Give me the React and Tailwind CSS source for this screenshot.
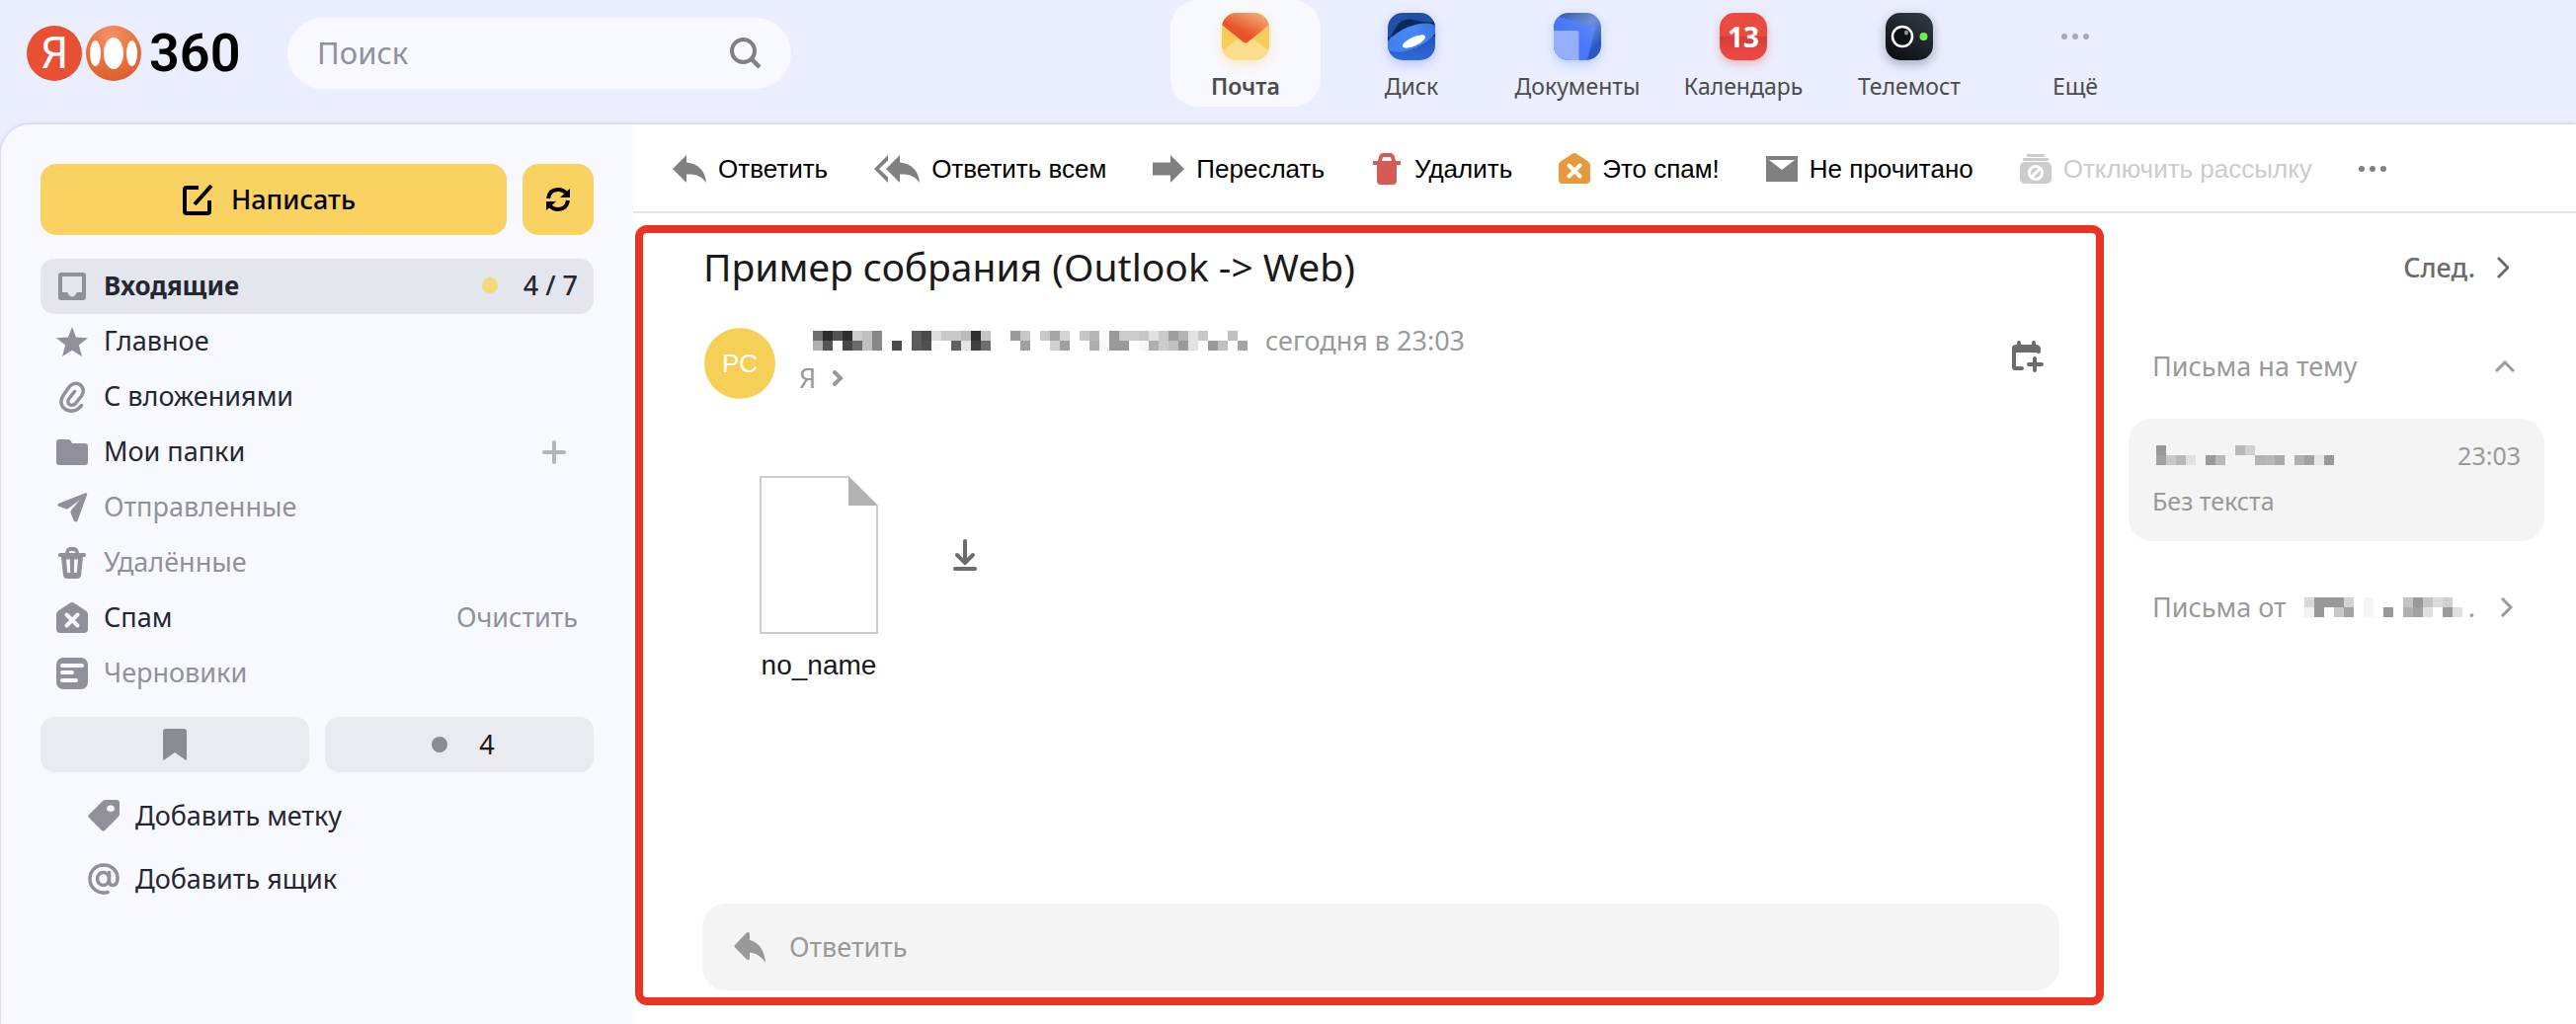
import React from "react";

const TEXT = "font-['Noto_Sans',sans-serif]";
const ARIAL = "font-['Liberation_Sans',sans-serif]";

function Icon({ w = 32, h = 32, className = "", children }) {
  return (
    <svg width={w} height={h} viewBox={`0 0 ${w} ${h}`} fill="currentColor" aria-hidden="true" className={`shrink-0 ${className}`}>
      {children}
    </svg>
  );
}

/* ---------- Service icons ---------- */

function MailApp() {
  return (
    <Icon w={48} h={48} className="drop-shadow-[0_4px_6px_rgba(249,190,70,0.3)]">
      <defs>
        <clipPath id="mailClip"><rect width="48" height="48" rx="15" /></clipPath>
        <linearGradient id="mailFlap" x1="0.3" y1="0.7" x2="0.85" y2="0">
          <stop offset="0.15" stopColor="#e9532b" />
          <stop offset="1" stopColor="#f4b07a" />
        </linearGradient>
      </defs>
      <g clipPath="url(#mailClip)">
        <rect width="48" height="48" fill="#f9cb58" />
        <path d="M0 39L24 20L48 39V48H0Z" fill="#f9dd8b" />
        <path d="M0 0H48V12L26.500 29.500Q24 31.500 21.500 29.500L0 12Z" fill="url(#mailFlap)" />
      </g>
    </Icon>
  );
}

function DiskApp() {
  return (
    <Icon w={48} h={48} className="drop-shadow-[0_4px_6px_rgba(80,100,250,0.3)]">
      <defs>
        <clipPath id="diskClip"><rect width="48" height="48" rx="15" /></clipPath>
        <linearGradient id="diskBg" x1="0" y1="0" x2="0" y2="1">
          <stop offset="0.4" stopColor="#2150aa" />
          <stop offset="1" stopColor="#2f6ade" />
        </linearGradient>
        <linearGradient id="diskRing" x1="0" y1="0" x2="1" y2="0">
          <stop offset="0" stopColor="#3f7ff3" />
          <stop offset="0.6" stopColor="#4687f8" />
          <stop offset="1" stopColor="#3672e4" />
        </linearGradient>
      </defs>
      <g clipPath="url(#diskClip)">
        <rect width="48" height="48" fill="url(#diskBg)" />
        <path d="M0 28C5 24 8 9 18 7C26 5 34 11 48 9V24H0Z" fill="#0f2a57" />
        <ellipse cx="24" cy="25" rx="27" ry="11" transform="rotate(-23 24 25)" fill="url(#diskRing)" />
        <ellipse cx="26.500" cy="29" rx="12.500" ry="4.500" transform="rotate(-25 26.500 29)" fill="#fff" />
      </g>
    </Icon>
  );
}

function DocsApp() {
  return (
    <Icon w={48} h={48} className="drop-shadow-[0_4px_6px_rgba(80,150,250,0.35)]">
      <defs>
        <clipPath id="docsClip"><rect width="48" height="48" rx="15" /></clipPath>
        <linearGradient id="docsBg" x1="0" y1="0" x2="1" y2="1">
          <stop offset="0" stopColor="#2b56ad" />
          <stop offset="0.5" stopColor="#7191d4" />
          <stop offset="0.8" stopColor="#2a5ac0" />
        </linearGradient>
        <linearGradient id="docsMid" x1="0" y1="1" x2="1" y2="0">
          <stop offset="0.5" stopColor="#4777fa" />
          <stop offset="1" stopColor="#688ef6" />
        </linearGradient>
      </defs>
      <g clipPath="url(#docsClip)">
        <rect width="48" height="48" fill="url(#docsBg)" />
        <path d="M0 3L41 13Q42.500 13.500 42.200 15L34 48H0Z" fill="url(#docsMid)" />
        <path d="M0 18H24Q25.500 18 25.500 19.500V48H0Z" fill="#94aff8" />
      </g>
    </Icon>
  );
}

function CalendarApp() {
  return (
    <span className="flex size-12 items-center justify-center rounded-[15px] bg-[linear-gradient(#ec4a40_50%,#d03e38_50%,#ea4840_85%)] text-[28px] leading-none font-bold text-white shadow-[0_4px_10px_rgba(236,74,64,0.3)]">
      13
    </span>
  );
}

function TelemostApp() {
  return (
    <Icon w={48} h={48} className="drop-shadow-[0_4px_6px_rgba(20,50,60,0.35)]">
      <defs>
        <linearGradient id="teleBg" x1="0.2" y1="1" x2="0.8" y2="0">
          <stop offset="0" stopColor="#0b0d10" />
          <stop offset="1" stopColor="#2f3a46" />
        </linearGradient>
      </defs>
      <rect width="48" height="48" rx="15" fill="url(#teleBg)" />
      <circle cx="17" cy="24" r="10" fill="#0e1216" stroke="#fff" strokeWidth="2.500" />
      <ellipse cx="21" cy="20" rx="2" ry="2.500" fill="#8b929b" />
      <circle cx="38.500" cy="24" r="4" fill="#6bf54b" />
    </Icon>
  );
}

/* ---------- Toolbar icons ---------- */

const REPLY = "M0 14L14 0V7.500C26 8.500 33 16 34 28C29 21 23 19 14 19.500V28Z";

const Reply = () => <Icon w={34} h={28}><path d={REPLY} /></Icon>;
const ReplyAll = () => (
  <Icon w={46} h={28}>
    <path d="M14 0V5.500L5 14L14 22.500V28L0 14Z" />
    <path d={REPLY} transform="translate(12 0)" />
  </Icon>
);
const Forward = () => <Icon w={32} h={28}><path d="M0 7.500H18V0L32 14L18 28V20.500H0Z" /></Icon>;
const Trash = () => (
  <Icon className="text-[#d55b57]">
    <path fillRule="evenodd" d="M2 8H7L8.500 2.500Q9.300 0 12 0H20Q22.700 0 23.500 2.500L25 8H30V12H26V28Q26 32 22 32H10Q6 32 6 28V12H2ZM11 8H21L20 4H12Z" />
  </Icon>
);
const SPAM = "M16 0Q17 0 18.500 1L30 8.500Q32 10 32 12V27Q32 31 28 31H4Q0 31 0 27V12Q0 10 2 8.500L13.500 1Q15 0 16 0Z";
const SpamOrange = () => (
  <Icon className="text-[#e69a3b]">
    <path d={SPAM} />
    <path d="M10.500 12.500L21.500 23.500M21.500 12.500L10.500 23.500" stroke="#fff" strokeWidth="4" strokeLinecap="round" />
  </Icon>
);
const Unread = () => (
  <Icon h={26}>
    <rect width="32" height="26" />
    <path d="M3 4H29L16 14Z" fill="#fff" />
  </Icon>
);
const Unsubscribe = () => (
  <Icon>
    <rect x="7" y="1" width="18" height="3" rx="1" />
    <rect x="3" y="5" width="26" height="3" rx="1" />
    <rect y="9" width="32" height="22" rx="5" />
    <circle cx="16" cy="20" r="6.500" fill="none" stroke="#fff" strokeWidth="3" />
    <path d="M12 24L20 16" stroke="#fff" strokeWidth="3" />
  </Icon>
);
const Dots = ({ className }) => (
  <Icon w={28} h={8} className={className}>
    <circle cx="3" cy="4" r="3" /><circle cx="14" cy="4" r="3" /><circle cx="25" cy="4" r="3" />
  </Icon>
);

/* ---------- Sidebar icons ---------- */

const InboxIcon = () => (
  <Icon>
    <path fillRule="evenodd" d="M5 2H27Q30 2 30 5V27Q30 30 27 30H5Q2 30 2 27V5Q2 2 5 2ZM6 6V22H11L13.500 25.500Q16 27.500 18.500 25.500L21 22H26V6Z" />
  </Icon>
);
const StarIcon = () => (
  <Icon>
    <path d="M16 1L20 11.500L32 12.200L22.800 19.500L26 31L16 24.800L6 31L9.200 19.500L0 12.200L12 11.500Z" strokeLinejoin="round" />
  </Icon>
);
const ClipIcon = () => (
  <Icon>
    <path fill="none" stroke="currentColor" strokeWidth="3.500" strokeLinecap="round" d="M25.500 24.500C22 29.500 16.500 31 11.500 29.500C5 27.500 3 20.500 7 14.500L12.500 6.500C15.500 2 20.500 1 24 3.500C28 6.500 28 11 25.500 15L19.500 22.500C18 24.500 15 25 13 23.300C11.300 21.800 11.500 19.300 13 17.500L18.500 10.500" />
  </Icon>
);
const FolderIcon = () => (
  <Icon><path d="M3 3H12Q14 3 15 5L16 7H29Q32 7 32 10V26Q32 29 29 29H3Q0 29 0 26V6Q0 3 3 3Z" /></Icon>
);
const SendIcon = () => (
  <Icon><path d="M2 12L29.500 1.200Q31.500 0.800 31.200 2.800L21.500 29.500Q19.500 31.500 17.800 29.500L14.500 21.500Q14.300 20 15 18.800L24 8L12.500 16.700Q11 17.800 9.500 17.300L2 14.500Q0.800 13.300 2 12Z" /></Icon>
);
const BinIcon = () => (
  <Icon>
    <path fillRule="evenodd" d="M9 6Q10 0 14 0H18Q22 0 23 6H28.500Q30 6 30 8Q30 10 28.500 10H27L25 28.500Q24.500 32 21 32H11Q7.500 32 7 28.500L5 10H3.500Q2 10 2 8Q2 6 3.500 6ZM12.500 6H19.500Q19 4 17.500 4H14.500Q13 4 12.500 6ZM10 12.500L11.200 26H14.200L13.800 12.500ZM22 12.500L20.800 26H17.800L18.200 12.500Z" />
  </Icon>
);
const SpamIcon = () => (
  <Icon>
    <path d={SPAM} />
    <path d="M10.500 12.500L21.500 23.500M21.500 12.500L10.500 23.500" stroke="#f8f9fe" strokeWidth="4" strokeLinecap="round" />
  </Icon>
);
const DraftIcon = () => (
  <Icon>
    <rect width="32" height="32" rx="7" />
    <path d="M6 8H26M6 15H16M6 23H20" stroke="#f8f9fe" strokeWidth="4" strokeLinecap="round" />
  </Icon>
);

/* ---------- Pixelated names ---------- */

function Mosaic({ rows, cols, className, label }) {
  return (
    <svg role="img" aria-label={label} width={cols * 10} height={rows.length * 10} className={`shrink-0 ${className}`} shapeRendering="crispEdges">
      {rows.map((row, y) =>
        row.split(" ").map((c, x) => c !== "--" && <rect key={`${y}-${x}`} x={x * 10} y={y * 10} width="10" height="10" fill={`#${c}${c}${c}`} />)
      )}
    </svg>
  );
}

const SENDER = [
  "6e 2d 55 2f cc c0 88 -- -- -- 5c 4a dd c8 c8 bb 2f c4 -- -- 9a c8 -- c8 a6 d4 -- c6 b6 fa 99 cc cc c6 e0 ca 9e b4 e2 c8 -- -- c0 --",
  "af 55 -- 48 6a c0 88 -- 4a -- 5c 50 fa -- 60 e4 40 6e -- -- -- a0 -- -- d0 a0 -- -- ae f8 99 99 -- f8 ae cc c0 9a e2 -- 99 c0 -- a4",
];
const CARD = [
  "99 -- -- -- -- -- -- -- b8 d0 -- -- -- -- -- -- -- --",
  "a2 c8 b8 e0 -- 99 b8 -- -- -- b4 b8 aa -- b0 a2 e8 99",
];
const FROM = [
  "d8 99 99 99 d4 -- f5 -- -- -- c4 99 c4 da d0 --",
  "f2 99 -- c8 a2 -- f5 -- 99 -- b0 a2 e0 -- 9c e0",
];

/* ---------- Page ---------- */

const services = [
  { label: "Почта", icon: <MailApp />, active: true },
  { label: "Диск", icon: <DiskApp /> },
  { label: "Документы", icon: <DocsApp /> },
  { label: "Календарь", icon: <CalendarApp /> },
  { label: "Телемост", icon: <TelemostApp /> },
  { label: "Ещё", icon: <span className="flex size-12 items-center justify-center"><Dots className="text-[#a6a8b3]" /></span> },
];

function Header() {
  return (
    <header className="flex h-[126px] items-start">
      <a href="#home" aria-label="Яндекс 360" className="ml-[27px] flex h-[108px] w-[264px] shrink-0 items-center gap-1">
        <span className="flex size-14 items-center justify-center rounded-full bg-[#e95033] font-['Roboto',sans-serif] text-[44px] leading-none text-white">Я</span>
        <svg width="56" height="56" viewBox="0 0 56 56" aria-hidden="true">
          <defs>
            <radialGradient id="logoBall" cx="0.45" cy="0.2" r="0.8">
              <stop offset="0" stopColor="#f59267" />
              <stop offset="0.6" stopColor="#e9713c" />
              <stop offset="1" stopColor="#dd5e2c" />
            </radialGradient>
          </defs>
          <circle cx="28" cy="28" r="28" fill="url(#logoBall)" />
          <g fill="#fff">
            <ellipse cx="28" cy="28" rx="10" ry="16" />
            <ellipse cx="9.500" cy="28" rx="5.500" ry="13" />
            <ellipse cx="46.500" cy="28" rx="5.500" ry="13" />
          </g>
        </svg>
        <span className="ml-1 font-['Roboto',sans-serif] text-[54px] leading-none font-semibold text-black">360</span>
      </a>
      <form className="mt-[18px] flex h-[72px] w-[510px] shrink-0 items-center rounded-[36px] bg-[#f8f9fe] pr-[30px] pl-[30px]">
        <input type="text" placeholder="Поиск" aria-label="Поиск" className="mb-0.5 min-w-0 flex-1 bg-transparent text-[31px] outline-none placeholder:text-[#90919b]" />
        <button type="button" aria-label="Найти" className="text-[#808080]">
          <Icon>
            <circle cx="13.500" cy="13.500" r="11.500" fill="none" stroke="currentColor" strokeWidth="4" />
            <path d="M21.500 21.500L30 30" stroke="currentColor" strokeWidth="4.500" />
          </Icon>
        </button>
      </form>
      <nav className="ml-[376px] flex">
        {services.map((s) => (
          <a key={s.label} href="#service" className={`flex h-[108px] w-[168px] shrink-0 flex-col items-center text-[23px] leading-8 text-[#4c4c4c] ${s.active ? "font-semibold" : ""}`}>
            <span className={`flex h-full w-[152px] flex-col items-center gap-[10px] rounded-[28px] pt-[13px] ${s.active ? "bg-[#f8f9fe]" : ""}`}>
              {s.icon}
              <span>{s.label}</span>
            </span>
          </a>
        ))}
      </nav>
    </header>
  );
}

const folders = [
  { label: "Входящие", icon: <InboxIcon />, active: true },
  { label: "Главное", icon: <StarIcon /> },
  { label: "С вложениями", icon: <ClipIcon /> },
  { label: "Мои папки", icon: <FolderIcon />, plus: true },
  { label: "Отправленные", icon: <SendIcon />, muted: true },
  { label: "Удалённые", icon: <BinIcon />, muted: true },
  { label: "Спам", icon: <SpamIcon />, clear: true },
  { label: "Черновики", icon: <DraftIcon />, muted: true },
];

function Sidebar() {
  return (
    <aside className="w-[640px] shrink-0 rounded-tl-[30px] bg-[#f8f9fe] px-10 pt-10 text-[27px] leading-9 text-[#262633]">
      <div className="flex gap-4">
        <button type="button" className="flex h-[72px] flex-1 items-center justify-center gap-[18px] rounded-2xl bg-[#f9d262] pr-[10px] font-medium text-black">
          <Icon>
            <path d="M17 4H5Q3 4 3 6V28Q3 30 5 30H26Q28 30 28 28V17" fill="none" stroke="currentColor" strokeWidth="4" />
            <path d="M13 21L30 2" stroke="currentColor" strokeWidth="4" />
          </Icon>
          Написать
        </button>
        <button type="button" aria-label="Обновить" className="flex size-[72px] items-center justify-center rounded-2xl bg-[#f9d262] text-black">
          <Icon w={24} h={24}>
            <path d="M2 11C3 5 7 2 12 2C16 2 18.500 3.500 20.500 6M22 13C21 19 17 22 12 22C8 22 5.500 20.500 3.500 18" fill="none" stroke="currentColor" strokeWidth="4" />
            <path d="M24 1V10H14ZM0 23V14H10Z" />
          </Icon>
        </button>
      </div>
      <ul className="mt-6">
        {folders.map((f) => (
          <li key={f.label} className={`flex h-14 items-center rounded-[14px] px-4 ${f.active ? "bg-[#e4e6ee]" : ""}`}>
            <a href="#folder" className={`flex flex-1 items-center gap-4 ${f.muted ? "text-[#90919b]" : ""} ${f.active ? "text-[26px] font-bold" : ""}`}>
              <span className="text-[#8f909a]">{f.icon}</span>
              <span className="pb-0.5">{f.label}</span>
            </a>
            {f.active && (
              <span className="flex items-center gap-[26px] pb-0.5 font-medium"><span className="size-4 rounded-full bg-[#f2d97c]" />4 / 7</span>
            )}
            {f.plus && (
              <button type="button" aria-label="Создать папку" className="mr-3 text-[#b3b5bd]">
                <Icon w={24} h={24}><path d="M12 2V22M2 12H22" stroke="currentColor" strokeWidth="4" strokeLinecap="round" /></Icon>
              </button>
            )}
            {f.clear && <button type="button" className="pb-0.5 text-[#90919b]">Очистить</button>}
          </li>
        ))}
      </ul>
      <div className="mt-4 grid grid-cols-2 gap-4">
        <button type="button" aria-label="Важные" className="flex h-14 items-center justify-center rounded-[14px] bg-[#eaebf0] text-[#8a8b95]">
          <Icon w={24} h={32}><path d="M3 0H21Q24 0 24 3V30.500Q24 33 22 31L12 24L2 31Q0 33 0 30.500V3Q0 0 3 0Z" /></Icon>
        </button>
        <button type="button" className="flex h-14 items-center justify-center gap-8 rounded-[14px] bg-[#eaebf0] pl-2 text-[#1a1a1a]">
          <span className="size-4 rounded-full bg-[#8a8b95]" />4
        </button>
      </div>
      <div className="mt-3 flex flex-col pl-12">
        <a href="#label" className="flex h-16 items-center gap-4">
          <Icon className="text-[#8f909a]">
            <path fillRule="evenodd" d="M17 0H29Q32 0 32 3V15L31 17L17 31Q15.500 32.500 14 31L1 18Q-0.500 16.500 1 15L15 1ZM23 5.500A3.300 3.300 0 1 0 23 12A3.300 3.300 0 1 0 23 5.500Z" />
          </Icon>
          Добавить метку
        </a>
        <a href="#mailbox" className="flex h-16 items-center gap-4">
          <Icon className="text-[#8f909a]">
            <g fill="none" stroke="currentColor" strokeWidth="3.500" strokeLinecap="round">
              <path d="M20 29.500C11 32 2 26 2 16C2 8 8 2 16 2C24 2 30 8 30 15C30 20 28 22.500 25 22.500C22.500 22.500 21.500 21 21.500 18.500V9.500" />
              <ellipse cx="15.500" cy="16" rx="6" ry="6.500" />
            </g>
          </Icon>
          Добавить ящик
        </a>
      </div>
    </aside>
  );
}

const actions = [
  { label: "Ответить", icon: <Reply /> },
  { label: "Ответить всем", icon: <ReplyAll /> },
  { label: "Переслать", icon: <Forward /> },
  { label: "Удалить", icon: <Trash /> },
  { label: "Это спам!", icon: <SpamOrange /> },
  { label: "Не прочитано", icon: <Unread /> },
  { label: "Отключить рассылку", icon: <Unsubscribe />, disabled: true },
];

function Toolbar() {
  return (
    <div className={`flex h-[90px] items-center gap-[47px] border-b-2 border-[#e5e5e5] pt-0.5 pl-10 text-[26px] ${ARIAL}`}>
      {actions.map((a) => (
        <button key={a.label} type="button" disabled={a.disabled} className={`flex shrink-0 items-center gap-3 whitespace-nowrap ${a.disabled ? "text-[#cccccc]" : "text-black"}`}>
          <span className={a.disabled ? "text-[#cccccc]" : "text-[#808080]"}>{a.icon}</span>
          {a.label}
        </button>
      ))}
      <button type="button" aria-label="Ещё действия"><Dots className="text-[#808080]" /></button>
    </div>
  );
}

function Message() {
  return (
    <article className="mt-3 mb-[19px] ml-0.5 flex min-w-0 flex-1 flex-col rounded-xl border-8 border-[#ea3323] pt-[11px] pr-[37px] pb-[7px] pl-[60px]">
      <h1 className="pl-px text-[39px] leading-[46px] text-[#1a1a1a]">Пример собрания (Outlook -&gt; Web)</h1>
      <div className="mt-[39px] flex items-start pl-0.5">
        <span className={`flex size-[72px] shrink-0 items-center justify-center rounded-full bg-[#f6cf56] text-[26px] text-white ${ARIAL}`}>РС</span>
        <div className="ml-6 text-[27px] leading-[38px] text-[#999999]">
          <div className="-mt-1.5 flex items-center">
            <Mosaic rows={SENDER} cols={44} label="Отправитель" className="ml-[14px]" />
            <time className="ml-[18px]">сегодня в 23:03</time>
          </div>
          <button type="button" className="flex items-center gap-4">
            Я
            <Icon w={12} h={16}><path d="M3 2L9 8L3 14" fill="none" stroke="currentColor" strokeWidth="4" strokeLinecap="round" /></Icon>
          </button>
        </div>
        <button type="button" aria-label="Создать событие" className="mt-[13px] mr-4 ml-auto text-[#6b6b6b]">
          <Icon>
            <path fillRule="evenodd" d="M7 0Q9 0 9 2V4H20V2Q20 0 22 0Q24 0 24 2V4Q29 4 29 9V11Q29 13 27 13Q25 13 25 12H4V26H9Q12 26 12 28Q12 30 9 30H3Q0 30 0 27V7Q0 4 5 4V2Q5 0 7 0Z" />
            <path d="M23 18V30M17 24H30" stroke="currentColor" strokeWidth="4" strokeLinecap="round" />
          </Icon>
        </button>
      </div>
      <div className="mt-[78px] flex pl-[34px]">
        <a href="#attachment" className={`flex w-[168px] flex-col items-center gap-3 text-[28px] leading-10 text-[#1a1a1a] ${ARIAL}`}>
          <svg width="120" height="160" viewBox="0 0 120 160" aria-hidden="true">
            <path d="M90 1H1V159H119V30" fill="#fff" stroke="#cccccc" strokeWidth="2" />
            <path d="M90 0L120 30H90Z" fill="#b3b3b3" />
          </svg>
          no_name
        </a>
        <button type="button" aria-label="Скачать" className="mt-16 ml-[52px] self-start text-[#6b6b6b]">
          <Icon w={24} h={32}>
            <path d="M12 2V23M4 16L12 24L20 16M2 30H22" fill="none" stroke="currentColor" strokeWidth="4" strokeLinecap="round" />
          </Icon>
        </button>
      </div>
      <button type="button" className="mt-auto flex h-[88px] items-center gap-6 rounded-3xl bg-[#f4f4f4] pl-8 text-[27px] text-[#999999]">
        <Icon>
          <path d="M1.500 13.500L12.500 2Q15.500 -0.500 16 3V9C25 11 31 19 32 31.500C27 25 22 22 16 21.500V27Q15.500 31 12.500 28L1.500 17Q-0.500 15 1.500 13.500Z" />
        </Icon>
        Ответить
      </button>
    </article>
  );
}

function Thread() {
  return (
    <aside className="w-[478px] shrink-0 pr-8 pl-[25px] text-[27px] leading-9 text-[#999999]">
      <div className="mt-[37px] flex justify-end pr-9">
        <button type="button" className="flex items-center gap-[22px] font-medium text-[#6b6b6b]">
          След.
          <Icon w={12} h={24}><path d="M1 2L11 12L1 22" fill="none" stroke="currentColor" strokeWidth="3" /></Icon>
        </button>
      </div>
      <button type="button" className="mt-16 flex w-full items-center justify-between pr-[30px] pl-6">
        Письма на тему
        <Icon w={20} h={12}><path d="M1 11L10 2L19 11" fill="none" stroke="currentColor" strokeWidth="3" /></Icon>
      </button>
      <a href="#message" className="mt-[35px] block rounded-3xl bg-[#f4f4f4] px-6 pt-[19px] pb-[23px] text-[25px]">
        <span className="flex items-center justify-between">
          <Mosaic rows={CARD} cols={18} label="Отправитель" className="ml-1" />
          <time>23:03</time>
        </span>
        <span className="mt-[10px] block">Без текста</span>
      </a>
      <button type="button" className="mt-[49px] flex w-full items-center pr-8 pl-6 whitespace-nowrap">
        Письма от
        <Mosaic rows={FROM} cols={16} label="Отправитель" className="mr-1.5 ml-[18px]" />
        .
        <Icon w={12} h={20} className="ml-auto"><path d="M1 1L10 10L1 19" fill="none" stroke="currentColor" strokeWidth="3" /></Icon>
      </button>
    </aside>
  );
}

export default function App() {
  return (
    <div className={`flex min-h-screen flex-col overflow-x-hidden bg-[#ebeefe] ${TEXT}`}>
      <Header />
      <div className="ml-px flex flex-1 rounded-tl-[30px] bg-white shadow-[0_0_4px_rgba(120,135,190,0.45)]">
        <Sidebar />
        <main className="flex min-w-0 flex-1 flex-col">
          <Toolbar />
          <div className="flex flex-1">
            <Message />
            <Thread />
          </div>
        </main>
      </div>
    </div>
  );
}
